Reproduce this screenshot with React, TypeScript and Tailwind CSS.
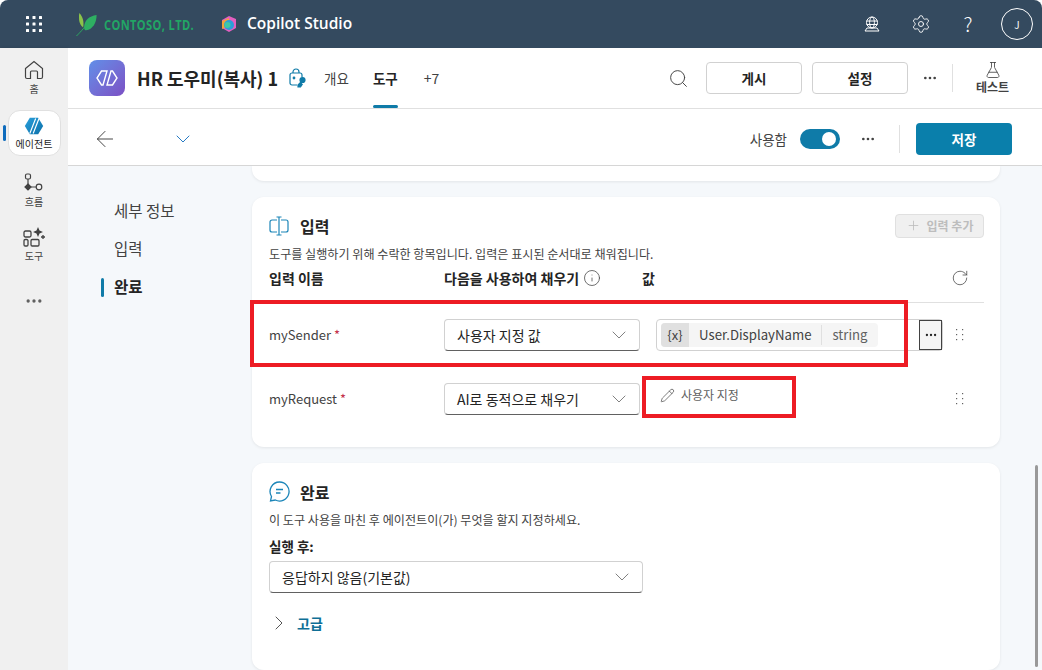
import React from "react";
import { ChevronDown, ChevronRight, ArrowLeft, Search, Settings, Plus, RotateCw, Pencil, Info, Ellipsis, FlaskConical } from "lucide-react";

const font = "font-['Noto_Sans_CJK_KR','Noto_Sans',sans-serif]";

const GripDots = () => (
  <svg width="10" height="14" viewBox="0 0 10 14" fill="#616161">
    {[1, 6, 11].map((y) => (
      <g key={y}>
        <rect x="1" y={y} width="1.2" height="1.2" />
        <rect x="7" y={y} width="1.2" height="1.2" />
      </g>
    ))}
  </svg>
);

const AgentHex = ({ size, id }: { size: number; id: string }) => (
  <svg width={size} height={size} viewBox="0 0 24 24">
    <defs>
      <linearGradient id={id} x1="0" y1="0" x2="1" y2="1">
        <stop offset="0" stopColor="#2aa0dc" />
        <stop offset="1" stopColor="#0b6fa8" />
      </linearGradient>
    </defs>
    <path d="M7 2h10l6 10-6 10H7L1 12z" fill={`url(#${id})`} />
    <path d="M14 3 7 21M18 3l-7 18" stroke="#fff" strokeWidth="1.4" />
  </svg>
);

const RailItem = ({ icon, label }: { icon: React.ReactNode; label: string }) => (
  <div className="flex h-[52px] flex-col items-center justify-center gap-[3px]">
    {icon}
    <span className="text-[10px] leading-3 text-[#424242]">{label}</span>
  </div>
);

const Select = ({ label, width }: { label: string; width: string }) => (
  <div className={`flex h-8 items-center justify-between rounded border border-[#d1d1d1] border-b-[#616161] bg-white pl-3 pr-2 ${width}`}>
    <span className="text-sm text-[#242424]">{label}</span>
    <ChevronDown size={24} strokeWidth={0.8} className="text-[#616161]" />
  </div>
);

const App = () => {
  return (
    <div className={`relative flex h-[670px] w-[1042px] flex-col overflow-hidden rounded-t-lg bg-white ${font}`}>
      {/* 상단 바 */}
      <header className="flex h-12 shrink-0 items-center bg-[#344a5f] pl-[26px] pr-[9px] text-white">
        <svg width="16" height="16" viewBox="0 0 16 16" fill="#fff">
          {[0, 6.5, 13].map((y) =>
            [0, 6.5, 13].map((x) => <rect key={`${x}-${y}`} x={x} y={y} width="3" height="3" rx="0.5" />),
          )}
        </svg>
        <svg className="ml-[34px]" width="22" height="25" viewBox="0 0 22 26">
          <path d="M3 1c-1 7 0 12 4 15 1-5 0-11-4-15z" fill="#8bc34a" />
          <path d="M21 3c-8 1-13 6-13 13 0 2 1 3 2 3 7-1 11-8 11-16z" fill="#2eaf62" />
          <path d="M0 25c3-3 7-7 13-15" stroke="#2eaf62" strokeWidth="1" fill="none" />
        </svg>
        <span className="ml-[6px] w-[90px] origin-left scale-x-[0.74] whitespace-nowrap font-['Open_Sans',sans-serif] text-[15px] font-bold tracking-[0.5px] text-[#22a565]">CONTOSO, LTD.</span>
        <svg className="ml-[26px]" width="18" height="18" viewBox="0 0 18 18">
          <path d="M9 1l7 3v9l-7 4-7-4V5z" fill="#e35fc0" />
          <path d="M2 6l7-3v8l-7 3z" fill="#f2a33a" />
          <circle cx="9" cy="10" r="5" fill="#2b9fd8" />
          <circle cx="7.5" cy="10" r="3" fill="#3fc8a4" />
        </svg>
        <span className="ml-[9px] font-['Open_Sans',sans-serif] text-[15.5px] font-semibold">Copilot Studio</span>
        <div className="ml-auto flex items-center">
          <svg width="18" height="18" viewBox="0 0 18 18" fill="none" stroke="#fff" strokeWidth="1">
            <circle cx="9" cy="7.5" r="5.5" />
            <ellipse cx="9" cy="7.5" rx="2.4" ry="5.500" />
            <path d="M3.5 6h11M3.5 9.5h11M2 16h14l-2-3H4z" />
          </svg>
          <Settings size={20} strokeWidth={1.1} className="ml-[30px]" />
          <span className="ml-[31px] w-3 text-center text-[20px] font-light leading-none">?</span>
          <div className="ml-[27px] flex h-8 w-8 items-center justify-center rounded-full border border-white text-[10px]">J</div>
        </div>
      </header>

      <div className="flex min-h-0 flex-1">
        {/* 왼쪽 레일 */}
        <nav className="flex w-[68px] shrink-0 flex-col items-center bg-[#f0f0f0] pt-[3px] shadow-[1px_0_3px_rgba(0,0,0,0.12)]">
          <RailItem
            label="홈"
            icon={
              <svg width="20" height="20" viewBox="0 0 20 20" fill="none" stroke="#424242" strokeWidth="1.2">
                <path d="M1.5 8.5 10 1.500l8.500 7V17a1.500 1.500 0 0 1-1.500 1.500h-3.500V12a1 1 0 0 0-1-1h-5a1 1 0 0 0-1 1v6.500H3A1.500 1.500 0 0 1 1.500 17z" />
              </svg>
            }
          />
          <div className="relative mt-[7px] flex h-[46px] w-[53px] flex-col items-center justify-center gap-0.5 rounded-xl border border-[#e0e0e0] bg-white">
            <span className="absolute -left-[6px] top-[14px] h-4 w-[3px] rounded bg-[#0f6cbd]" />
            <AgentHex size={20} id="railHex" />
            <span className="text-[10px] leading-3 text-[#242424]">에이전트</span>
          </div>
          <div className="mt-[8px]">
            <RailItem
              label="흐름"
              icon={
                <svg width="20" height="20" viewBox="0 0 20 20" fill="none" stroke="#424242" strokeWidth="1.2">
                  <rect x="1.500" y="1" width="5" height="5" rx="1.5" />
                  <path d="M4 6v5M7 14h5" />
                  <path d="M4 11l3 3-3 3-3-3z" fill="#424242" />
                  <circle cx="15" cy="14" r="2.800" />
                </svg>
              }
            />
          </div>
          <div className="mt-[2px]">
            <RailItem
              label="도구"
              icon={
                <svg width="22" height="20" viewBox="0 0 22 20" fill="none" stroke="#424242" strokeWidth="1.3">
                  <rect x="1" y="4" width="7" height="6" rx="1.5" />
                  <rect x="1" y="12.5" width="4" height="6.5" rx="1.2" />
                  <rect x="8" y="12.5" width="8" height="6.5" rx="1.2" />
                  <path d="M15 0l1.500 3.500L20 5l-3.500 1.500L15 10l-1.500-3.500L10 5l3.500-1.500z" fill="#424242" stroke="none" />
                  <path d="M20 8v4M18 10h4" />
                </svg>
              }
            />
          </div>
          <Ellipsis size={20} className="mt-[21px] text-[#616161]" />
        </nav>

        <main className="flex min-w-0 flex-1 flex-col">
          {/* 에이전트 헤더 */}
          <div className="flex h-[61px] shrink-0 items-center border-b border-[#e0e0e0] bg-white pl-[21px] pr-[33px]">
            <div className="flex h-9 w-9 items-center justify-center rounded-lg bg-gradient-to-br from-[#5f8fe8] to-[#7a4fc4]">
              <svg width="22" height="18" viewBox="0 0 22 18" fill="none" stroke="#fff" strokeWidth="1.4">
                <path d="M7 2H5.500L1 9l4.500 7H7l4-14zM15 16h1.500L21 9l-4.500-7H15l-4 14z" />
              </svg>
            </div>
            <h1 className="ml-3 text-lg font-bold text-[#242424]">HR 도우미(복사) 1</h1>
            <svg className="ml-[11px]" width="18" height="20" viewBox="0 0 18 20" fill="none" stroke="#0f7ba8" strokeWidth="1.2">
              <path d="M4 5V4a3 3 0 0 1 6 0v1M8 17H3a2 2 0 0 1-2-2V7a2 2 0 0 1 2-2h8a2 2 0 0 1 2 2v2" />
              <circle cx="5" cy="10" r="0.8" fill="#0f7ba8" />
              <circle cx="13.500" cy="12" r="2.500" fill="#0f7ba8" />
              <path d="M12 14l-3 3v2h2.500l2-3" fill="#0f7ba8" />
            </svg>
            <span className="ml-[17px] text-[13.5px] text-[#424242]">개요</span>
            <div className="relative ml-[24px] flex h-[60px] items-center">
              <span className="text-[13.5px] font-bold text-[#242424]">도구</span>
              <span className="absolute bottom-0 left-0 right-0 h-[3px] rounded-sm bg-[#0f7ba8]" />
            </div>
            <span className="ml-[26px] text-sm text-[#424242]">+7</span>
            <Search size={21} strokeWidth={1.1} className="ml-auto text-[#424242]" />
            <button className="ml-[17px] h-8 w-24 rounded border border-[#d1d1d1] text-[13.5px] font-bold text-[#242424]">게시</button>
            <button className="ml-[10px] h-8 w-24 rounded border border-[#d1d1d1] text-[13.5px] font-bold text-[#242424]">설정</button>
            <Ellipsis size={16} className="ml-[14px] text-[#424242]" />
            <div className="ml-[14px] h-7 w-px bg-[#e0e0e0]" />
            <div className="ml-[23px] flex w-[33px] flex-col items-center">
              <FlaskConical size={18} strokeWidth={1.1} className="text-[#424242]" />
              <span className="whitespace-nowrap text-xs font-bold text-[#424242]">테스트</span>
            </div>
          </div>

          {/* 도구 툴바 */}
          <div className="flex h-[57px] shrink-0 items-center border-b border-[#d6d6d6] bg-white pl-6 pr-[30px] pt-1">
            <ArrowLeft size={26} strokeWidth={0.9} className="text-[#424242]" />
            <ChevronDown size={24} strokeWidth={0.9} className="ml-[53px] text-[#0f6cbd]" />
            <span className="ml-auto text-[13.5px] text-[#424242]">사용함</span>
            <div className="ml-[13px] flex h-5 w-10 items-center justify-end rounded-full bg-[#0f7ba8] pr-1">
              <span className="h-3.5 w-3.5 rounded-full bg-white" />
            </div>
            <Ellipsis size={16} className="ml-[20px] text-[#424242]" />
            <div className="ml-[23px] h-7 w-px bg-[#e0e0e0]" />
            <button className="ml-4 h-8 w-24 rounded bg-[#0a7fab] text-[13.5px] font-bold text-white">저장</button>
          </div>

          {/* 본문 */}
          <div className="flex min-h-0 flex-1 overflow-hidden bg-[#f5f8fb]">
            <aside className="w-[184px] shrink-0 pl-[33px] pt-[26px]">
              <div className="flex h-[38px] items-center pl-[13px] text-[15.5px] text-[#424242]">세부 정보</div>
              <div className="flex h-[38px] items-center pl-[13px] text-[15.5px] text-[#424242]">입력</div>
              <div className="flex h-[38px] items-center text-[15.5px] font-bold text-[#242424]">
                <span className="mr-[10px] h-[19px] w-[3px] rounded-sm bg-[#0f7ba8]" />
                완료
              </div>
            </aside>

            <div className="flex w-[748px] shrink-0 flex-col gap-4">
              <div className="h-[15px] shrink-0 rounded-b-xl bg-white shadow-[0_1px_3px_rgba(0,0,0,0.08)]" />

              {/* 입력 카드 */}
              <section className="h-[250px] shrink-0 rounded-xl bg-white pl-[17px] pr-4 pt-[15px] shadow-[0_1px_3px_rgba(0,0,0,0.08)]">
                <div className="flex h-[27px] items-center">
                  <svg width="20" height="20" viewBox="0 0 20 20" fill="none" stroke="#1b85b8" strokeWidth="1.2">
                    <path d="M8 4H3a2 2 0 0 0-2 2v8a2 2 0 0 0 2 2h5M12 4h5a2 2 0 0 1 2 2v8a2 2 0 0 1-2 2h-5M10 1v18M7.500 1h5M7.500 19h5" />
                  </svg>
                  <h2 className="ml-[11px] text-base font-bold text-[#242424]">입력</h2>
                  <button className="ml-auto flex h-6 w-[89px] items-center justify-center gap-1.5 rounded border border-[#e0e0e0] bg-[#f0f0f0] text-xs font-semibold text-[#bdbdbd]">
                    <Plus size={15} strokeWidth={1.3} />
                    입력 추가
                  </button>
                </div>
                <p className="mt-[7px] text-[12.1px] leading-4 text-[#424242]">도구를 실행하기 위해 수락한 항목입니다. 입력은 표시된 순서대로 채워집니다.</p>
                <div className="flex h-[41px] items-center border-b border-[#e0e0e0] pb-[8px] text-sm font-bold text-[#242424]">
                  <span className="w-[175px]">입력 이름</span>
                  <span className="flex w-[198px] items-center gap-1">
                    다음을 사용하여 채우기
                    <Info size={18} strokeWidth={1} className="text-[#424242]" />
                  </span>
                  <span>값</span>
                  <RotateCw size={18} strokeWidth={1} className="ml-auto mr-[15px] font-normal text-[#424242]" />
                </div>
                <div className="flex h-[64px] items-center">
                  <span className="w-[175px] text-[13px] text-[#424242]">
                    mySender <span className="text-[#c4314b]">*</span>
                  </span>
                  <Select label="사용자 지정 값" width="w-[196px]" />
                  <div className="ml-[16px] flex h-8 w-[287px] items-center rounded border border-[#d1d1d1] pl-1">
                    <div className="flex h-6 items-center rounded-sm bg-[#f5f5f5]">
                      <span className="flex h-6 w-7 items-center justify-center rounded-l-sm bg-[#e0e0e0] text-[13px] text-[#424242]">{"{x}"}</span>
                      <span className="px-[10px] text-[13.2px] text-[#424242]">User.DisplayName</span>
                      <span className="h-5 w-px bg-[#e0e0e0]" />
                      <span className="px-[10px] text-[13.2px] text-[#616161]">string</span>
                    </div>
                    <span className="ml-auto flex h-[30px] w-[23px] items-center justify-center border border-[#424242] bg-[#f5f5f5]">
                      <Ellipsis size={14} className="text-[#242424]" />
                    </span>
                  </div>
                  <span className="ml-[12px]"><GripDots /></span>
                </div>
                <div className="flex h-[64px] items-center">
                  <span className="w-[175px] text-[13px] text-[#424242]">
                    myRequest <span className="text-[#c4314b]">*</span>
                  </span>
                  <Select label="AI로 동적으로 채우기" width="w-[196px]" />
                  <div className="ml-[20px] flex w-[283px] items-center gap-1.5 pb-2 text-xs text-[#616161]">
                    <Pencil size={15} strokeWidth={1.1} className="text-[#424242]" />
                    사용자 지정
                  </div>
                  <span className="ml-[12px]"><GripDots /></span>
                </div>
              </section>

              {/* 완료 카드 */}
              <section className="h-[207px] shrink-0 rounded-xl bg-white px-[17px] pt-[15px] shadow-[0_1px_3px_rgba(0,0,0,0.08)]">
                <div className="flex h-[27px] items-center">
                  <svg width="21" height="21" viewBox="0 0 21 21" fill="none" stroke="#1b85b8" strokeWidth="1.3">
                    <path d="M10.500 1a9.500 9.500 0 1 1-4.200 18L1.500 20l1-4.500A9.500 9.500 0 0 1 10.500 1z" />
                    <path d="M7 8.500h7M7 12h4.500" />
                  </svg>
                  <h2 className="ml-[10px] text-base font-bold text-[#242424]">완료</h2>
                </div>
                <p className="mt-[7px] text-[12.1px] leading-4 text-[#424242]">이 도구 사용을 마친 후 에이전트이(가) 무엇을 할지 지정하세요.</p>
                <p className="mt-[10px] text-[13.5px] font-bold leading-4 text-[#242424]">실행 후:</p>
                <div className="mt-[7px]">
                  <Select label="응답하지 않음(기본값)" width="w-[374px]" />
                </div>
                <div className="mt-[18px] flex items-center text-[#0f6f96]">
                  <ChevronRight size={24} strokeWidth={0.9} className="ml-[-2px] text-[#424242]" />
                  <span className="ml-[6px] text-sm font-bold">고급</span>
                </div>
              </section>
            </div>
          </div>
        </main>
      </div>

      {/* 스크롤바 */}
      <div className="absolute right-[4px] top-[465px] h-[202px] w-[3px] rounded bg-[#999999]" />

      {/* 빨간 주석 상자 */}
      <div className="absolute left-[250px] top-[300px] h-[67px] w-[658px] border-[4px] border-[#ed1c24]" />
      <div className="absolute left-[642px] top-[376px] h-[42px] w-[154px] border-[4px] border-[#ed1c24]" />
    </div>
  );
};

export default App;
